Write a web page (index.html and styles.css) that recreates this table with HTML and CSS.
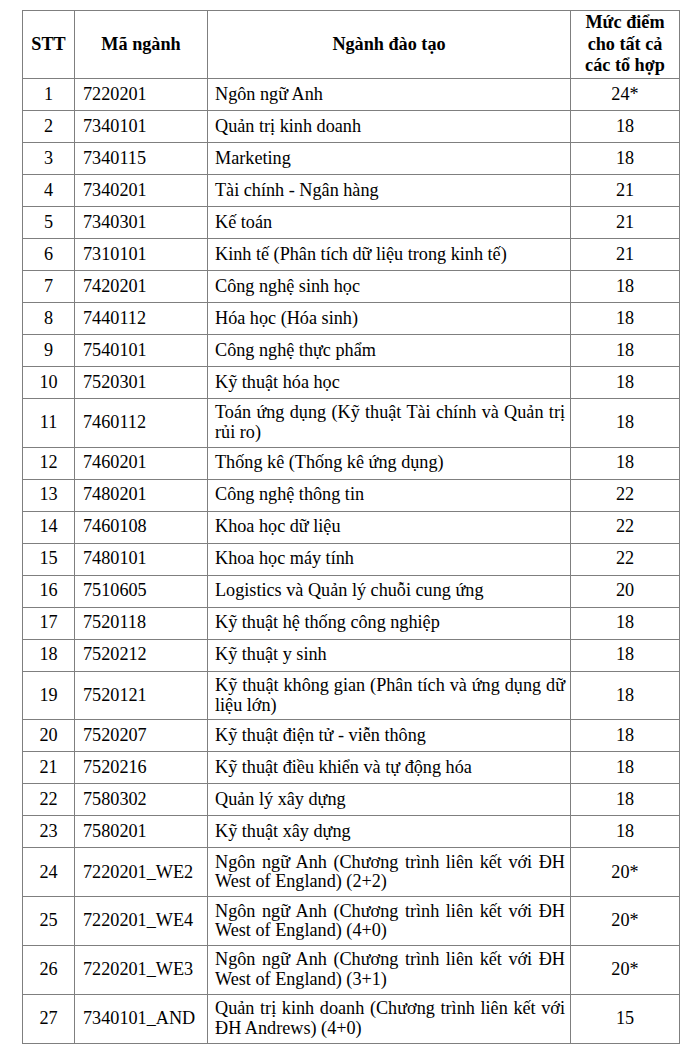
FILE: index.html
```html
<!DOCTYPE html>
<html lang="vi">
<head>
<meta charset="utf-8">
<link rel="stylesheet" href="styles.css">
</head>
<body>
<table class="tbl">
<colgroup>
<col class="c1"><col class="c2"><col class="c3"><col class="c4">
</colgroup>
<thead>
<tr class="head">
<th>STT</th><th>Mã ngành</th><th>Ngành đào tạo</th><th>Mức điểm<br>cho tất cả<br>các tổ hợp</th>
</tr>
</thead>
<tbody>
<tr><td class="n">1</td><td class="code">7220201</td><td class="name">Ngôn ngữ Anh</td><td class="n">24*</td></tr>
<tr><td class="n">2</td><td class="code">7340101</td><td class="name">Quản trị kinh doanh</td><td class="n">18</td></tr>
<tr><td class="n">3</td><td class="code">7340115</td><td class="name">Marketing</td><td class="n">18</td></tr>
<tr><td class="n">4</td><td class="code">7340201</td><td class="name">Tài chính - Ngân hàng</td><td class="n">21</td></tr>
<tr><td class="n">5</td><td class="code">7340301</td><td class="name">Kế toán</td><td class="n">21</td></tr>
<tr><td class="n">6</td><td class="code">7310101</td><td class="name">Kinh tế (Phân tích dữ liệu trong kinh tế)</td><td class="n">21</td></tr>
<tr><td class="n">7</td><td class="code">7420201</td><td class="name">Công nghệ sinh học</td><td class="n">18</td></tr>
<tr><td class="n">8</td><td class="code">7440112</td><td class="name">Hóa học (Hóa sinh)</td><td class="n">18</td></tr>
<tr><td class="n">9</td><td class="code">7540101</td><td class="name">Công nghệ thực phẩm</td><td class="n">18</td></tr>
<tr><td class="n">10</td><td class="code">7520301</td><td class="name">Kỹ thuật hóa học</td><td class="n">18</td></tr>
<tr><td class="n">11</td><td class="code">7460112</td><td class="name">Toán ứng dụng (Kỹ thuật Tài chính và Quản trị rủi ro)</td><td class="n">18</td></tr>
<tr><td class="n">12</td><td class="code">7460201</td><td class="name">Thống kê (Thống kê ứng dụng)</td><td class="n">18</td></tr>
<tr><td class="n">13</td><td class="code">7480201</td><td class="name">Công nghệ thông tin</td><td class="n">22</td></tr>
<tr><td class="n">14</td><td class="code">7460108</td><td class="name">Khoa học dữ liệu</td><td class="n">22</td></tr>
<tr><td class="n">15</td><td class="code">7480101</td><td class="name">Khoa học máy tính</td><td class="n">22</td></tr>
<tr><td class="n">16</td><td class="code">7510605</td><td class="name">Logistics và Quản lý chuỗi cung ứng</td><td class="n">20</td></tr>
<tr><td class="n">17</td><td class="code">7520118</td><td class="name">Kỹ thuật hệ thống công nghiệp</td><td class="n">18</td></tr>
<tr><td class="n">18</td><td class="code">7520212</td><td class="name">Kỹ thuật y sinh</td><td class="n">18</td></tr>
<tr><td class="n">19</td><td class="code">7520121</td><td class="name">Kỹ thuật không gian (Phân tích và ứng dụng dữ liệu lớn)</td><td class="n">18</td></tr>
<tr><td class="n">20</td><td class="code">7520207</td><td class="name">Kỹ thuật điện tử - viễn thông</td><td class="n">18</td></tr>
<tr><td class="n">21</td><td class="code">7520216</td><td class="name">Kỹ thuật điều khiển và tự động hóa</td><td class="n">18</td></tr>
<tr><td class="n">22</td><td class="code">7580302</td><td class="name">Quản lý xây dựng</td><td class="n">18</td></tr>
<tr><td class="n">23</td><td class="code">7580201</td><td class="name">Kỹ thuật xây dựng</td><td class="n">18</td></tr>
<tr><td class="n">24</td><td class="code">7220201_WE2</td><td class="name">Ngôn ngữ Anh (Chương trình liên kết với ĐH West of England) (2+2)</td><td class="n">20*</td></tr>
<tr><td class="n">25</td><td class="code">7220201_WE4</td><td class="name">Ngôn ngữ Anh (Chương trình liên kết với ĐH West of England) (4+0)</td><td class="n">20*</td></tr>
<tr><td class="n">26</td><td class="code">7220201_WE3</td><td class="name">Ngôn ngữ Anh (Chương trình liên kết với ĐH West of England) (3+1)</td><td class="n">20*</td></tr>
<tr><td class="n">27</td><td class="code">7340101_AND</td><td class="name">Quản trị kinh doanh (Chương trình liên kết với ĐH Andrews) (4+0)</td><td class="n">15</td></tr>
</tbody>
</table>
</body>
</html>
```
FILE: styles.css
```css
html, body {
  margin: 0;
  padding: 0;
  background: #ffffff;
}
body {
  padding: 10px 0 0 22px;
  font-family: "Liberation Serif", "Times New Roman", serif;
  font-size: 18.2px;
  color: #000;
}
.tbl {
  border-collapse: collapse;
  table-layout: fixed;
  width: 657px;
}
.c1 { width: 52px; }
.c2 { width: 133px; }
.c3 { width: 363px; }
.c4 { width: 109px; }
.tbl tbody tr { height: 32px; }
.tbl th, .tbl td {
  border: 1px solid #7f7f7f;
  line-height: 19.5px;
  padding: 4.4px 7px;
  vertical-align: middle;
}
.tbl th {
  font-weight: bold;
  text-align: center;
  line-height: 21.5px;
  padding-top: 1.2px;
  padding-bottom: 1.2px;
}
.tbl td.n { text-align: center; }
.tbl td.code { text-align: left; padding-left: 8px; }
.tbl td.name { text-align: justify; padding-right: 5px; }
```
